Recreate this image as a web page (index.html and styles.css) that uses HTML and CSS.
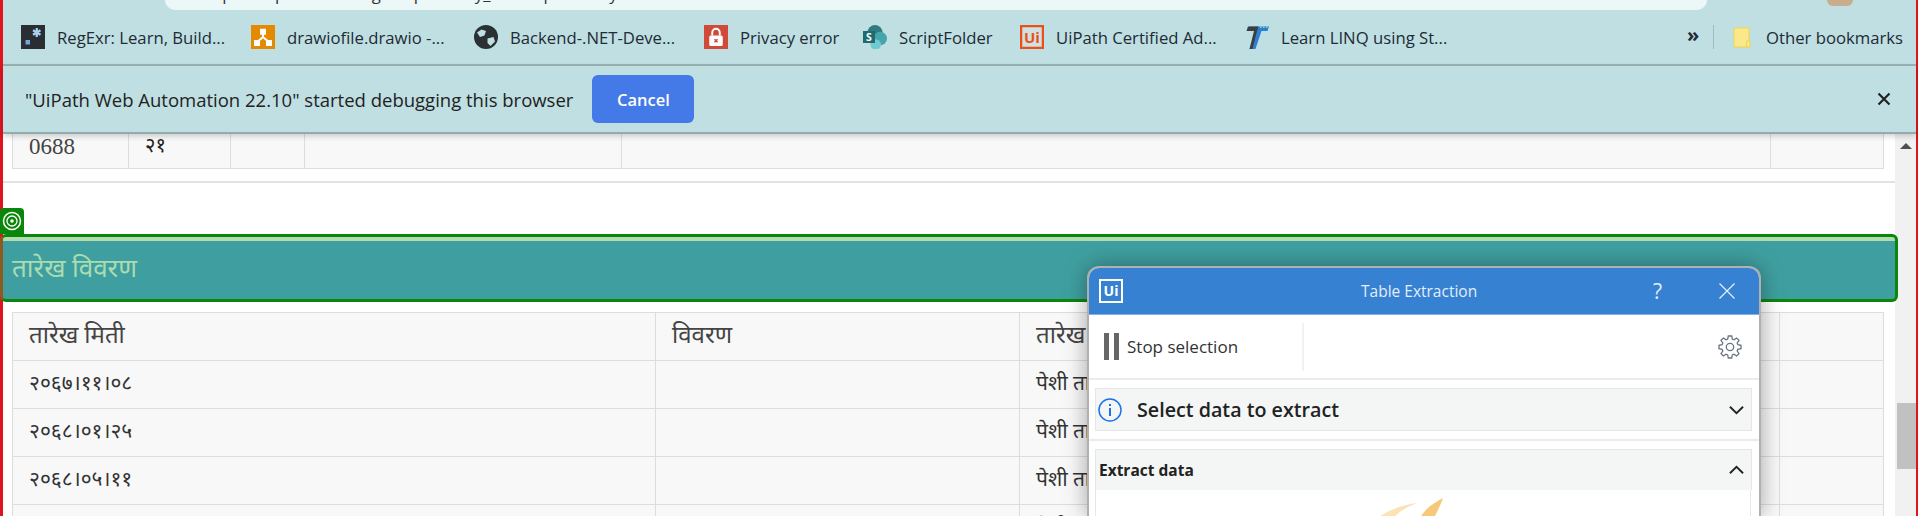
FILE: index.html
```html
<html>
<head>
    <meta charset="utf-8">
    <link rel="stylesheet" href="styles.css">
</head>
<body>
<div class="frame">
    <div class="omnibar">
        <div class="omnibox"><span class="omni-text">https://supremecourt.gov.np/weekly_dainik/pesi/daily/80</span></div>
        <div class="avatar"></div>
    </div>

    <div class="bookmarks">
        <div class="bm bm-1">
            <svg class="fav" viewBox="0 0 16 16"><rect width="16" height="16" fill="#2a2e33"/><rect x="3" y="10" width="3" height="3" fill="#6ea8dc"/><path d="M10.5 2v6M8 3.500l5 3M13 3.500l-5 3" stroke="#a8d0f0" stroke-width="1.500"/></svg>
            <span>RegExr: Learn, Build...</span>
        </div>
        <div class="bm bm-2">
            <svg class="fav" viewBox="0 0 16 16"><rect width="16" height="16" fill="#e38a00"/><path d="M8 6v3M8 8L4.500 11M8 8l3.500 3" stroke="#fff" stroke-width="1.300" fill="none"/><rect x="6" y="2.500" width="4" height="4" fill="#fff"/><rect x="2" y="10" width="4" height="4" fill="#fff"/><rect x="10" y="10" width="4" height="4" fill="#fff"/></svg>
            <span>drawiofile.drawio -...</span>
        </div>
        <div class="bm bm-3">
            <svg class="fav" viewBox="0 0 16 16"><circle cx="8" cy="8" r="8" fill="#2b3033"/><path d="M2 5l3-2 3 1-1 3-3 1zM9 9l4-1 1 3-3 3-2-2z" fill="#bfdfe3"/></svg>
            <span>Backend-.NET-Deve...</span>
        </div>
        <div class="bm bm-4">
            <svg class="fav" viewBox="0 0 16 16"><rect width="16" height="16" fill="#d04a3a"/><rect x="3.500" y="7" width="9" height="7" rx="1" fill="#fff"/><path d="M5.500 7V5a2.500 2.500 0 0 1 5 0v2" stroke="#fff" stroke-width="1.300" fill="none"/><path d="M7 9.500l2 2M9 9.500l-2 2" stroke="#d04a3a"/></svg>
            <span>Privacy error</span>
        </div>
        <div class="bm bm-5">
            <svg class="fav" viewBox="0 0 16 16"><circle cx="8" cy="5" r="5" fill="#2f7b80"/><circle cx="11.500" cy="9" r="4.500" fill="#45a5a8"/><circle cx="8.500" cy="13" r="3.500" fill="#6fcbd0"/><rect y="4" width="8" height="8" fill="#1f6c70"/><text x="4" y="10.500" class="sp-s">S</text></svg>
            <span>ScriptFolder</span>
        </div>
        <div class="bm bm-6">
            <svg class="fav" viewBox="0 0 16 16"><rect x="0.750" y="0.750" width="14.500" height="14.500" fill="#fbe9de" fill-opacity="0.300" stroke="#e8521a" stroke-width="1.500"/><text x="8" y="11.800" class="ui-s">Ui</text></svg>
            <span>UiPath Certified Ad...</span>
        </div>
        <div class="bm bm-7">
            <svg class="fav" viewBox="0 0 16 16"><path d="M3 1h13l-1 3h-4L7 16H3l4-12H2z" fill="#2f7fd0"/><path d="M2 1h7L8 4H1z" fill="#3a3f44"/><path d="M6 4L3 16h2L8 4z" fill="#3a3f44"/><path d="M10 1.500h5" stroke="#6fe0c0" stroke-dasharray="1 1"/></svg>
            <span>Learn LINQ using St...</span>
        </div>
        <div class="bm-more">»</div>
        <div class="bm-sep"></div>
        <div class="bm bm-other">
            <svg class="fav" viewBox="0 0 18 21"><path d="M1 1h15v15l-3 4H1z" fill="#fbe88a" stroke="#f0d54a"/><path d="M14 14h3v6h-4z" fill="#fbe88a" stroke="#f0d54a"/></svg>
            <span>Other bookmarks</span>
        </div>
    </div>

    <div class="infobar">
        <span class="info-msg">"UiPath Web Automation 22.10" started debugging this browser</span>
        <button class="cancel">Cancel</button>
        <svg class="info-close" viewBox="0 0 14 14"><path d="M1.500 1.500l11 11M12.500 1.500l-11 11" stroke="#222" stroke-width="2.200"/></svg>
    </div>

    <div class="page">
        <div class="content">
            <table class="grid grid-top">
                <tr><td class="c1">0688</td><td class="c2">२१</td><td class="c3"></td><td class="c4"></td><td class="c5"></td><td class="c6"></td></tr>
            </table>
            <div class="rule"></div>
            <div class="target-tab">
                <svg viewBox="0 0 20 20"><circle cx="10" cy="10" r="8.500" fill="none" stroke="#fff" stroke-width="1.500"/><circle cx="10" cy="10" r="5" fill="none" stroke="#fff" stroke-width="1.300"/><circle cx="10" cy="10" r="1.800" fill="#fff"/></svg>
            </div>
            <div class="section-head">तारेख विवरण</div>
            <div class="dates-wrap">
                <table class="grid grid-dates">
                    <tr class="row-head"><td class="d1">तारेख मिती</td><td class="d2">विवरण</td><td class="d3">तारेख</td><td class="d4"></td></tr>
                    <tr><td>२०६७।११।०८</td><td></td><td>पेशी तारेख</td><td></td></tr>
                    <tr><td>२०६८।०१।२५</td><td></td><td>पेशी तारेख</td><td></td></tr>
                    <tr><td>२०६८।०५।११</td><td></td><td>पेशी तारेख</td><td></td></tr>
                    <tr><td></td><td></td><td>पेशी तारेख</td><td></td></tr>
                </table>
            </div>
        </div>
        <div class="scrollbar">
            <div class="sb-up"></div>
            <div class="sb-thumb"></div>
        </div>

        <div class="dialog">
            <div class="dlg-head">
                <div class="dlg-logo">Ui</div>
                <div class="dlg-title">Table Extraction</div>
                <div class="dlg-help">?</div>
                <svg class="dlg-x" viewBox="0 0 16 16"><path d="M0.500 0.500l15 15M15.500 0.500l-15 15" stroke="#e8f1fb" stroke-width="1.200"/></svg>
            </div>
            <div class="dlg-tools">
                <div class="stop-btn">
                    <div class="pause"><i></i><i></i></div>
                    <span>Stop selection</span>
                </div>
                <svg class="gear" viewBox="0 0 24 24" fill="none" stroke="#68747f" stroke-width="1.300"><circle cx="12" cy="12" r="3.700"/><path d="M10.300 1h3.400l.6 3.100 1.700.7 2.600-1.800 2.400 2.400-1.800 2.600.7 1.700 3.100.6v3.400l-3.100.6-.7 1.700 1.800 2.600-2.400 2.400-2.600-1.800-1.700.7-.6 3.100h-3.400l-.6-3.100-1.700-.7-2.600 1.800-2.400-2.400 1.800-2.600-.7-1.700-3.100-.6v-3.400l3.100-.6.7-1.700-1.800-2.600 2.400-2.400 2.600 1.800 1.700-.7z"/></svg>
            </div>
            <div class="dlg-section">
                <div class="panel-head panel-select">
                    <svg class="info-i" viewBox="0 0 24 24"><circle cx="12" cy="12" r="11" fill="none" stroke="#1a73e8" stroke-width="1.500"/><rect x="11" y="10" width="2" height="8" fill="#1a73e8"/><rect x="11" y="6" width="2" height="2" fill="#1a73e8"/></svg>
                    <span>Select data to extract</span>
                    <svg class="chev" viewBox="0 0 16 10"><path d="M1 1.500l7 7 7-7" fill="none" stroke="#222" stroke-width="2"/></svg>
                </div>
            </div>
            <div class="dlg-section dlg-last">
                <div class="panel-head panel-extract">
                    <span>Extract data</span>
                    <svg class="chev" viewBox="0 0 16 10"><path d="M1 8.500l7-7 7 7" fill="none" stroke="#222" stroke-width="2"/></svg>
                </div>
                <div class="panel-body">
                    <svg class="wing" viewBox="0 0 66 20"><path d="M0 20C10 12 24 7 39 5C30 9 22 12 16 20z" fill="#fbe3b6"/><path d="M65 0C58 4 48 9 42 20L56 20C60 12 63 6 65 0z" fill="#f6c877"/></svg>
                </div>
            </div>
        </div>
    </div>
</div>
</body>
</html>
```

FILE: styles.css
```css
html, body {
    margin: 0;
    padding: 0;
    height: 516px;
    overflow: hidden;
}
.frame {
    box-sizing: border-box;
    width: 1918px;
    height: 516px;
    border-left: 3px solid #e0141f;
    border-right: 2px solid #e0141f;
    display: flex;
    flex-direction: column;
    font-family: "Open Sans", "Noto Sans", sans-serif;
    background: #fff;
}

/* top strip of the browser */
.omnibar {
    height: 10px;
    background: #bfdfe3;
    padding-left: 162px;
    flex: none;
    display: flex;
}
.omnibox {
    width: 1542px;
    height: 10px;
    flex: none;
    background: #ecf7f8;
    border-radius: 0 0 20px 20px;
    overflow: hidden;
}
.omni-text {
    display: block;
    margin: -16px 0 0 35px;
    font-size: 16.700px;
    line-height: 20px;
    color: #333;
    white-space: nowrap;
}
.avatar {
    width: 26px;
    height: 6px;
    flex: none;
    margin-left: 120px;
    background: #c9ad8c;
    border-radius: 0 0 13px 13px;
}

.bookmarks {
    height: 56px;
    flex: none;
    box-sizing: border-box;
    background: #bfdfe3;
    border-bottom: 2px solid #9db5b5;
    display: flex;
    align-items: center;
    color: #222b33;
    font-size: 16.700px;
}
.bm {
    display: flex;
    align-items: center;
    white-space: nowrap;
    flex: none;
}
.fav {
    width: 24px;
    height: 24px;
    flex: none;
    margin-right: 12px;
}
.bm-1 { margin-left: 18px; width: 230px; }
.bm-2 { width: 223px; }
.bm-3 { width: 230px; }
.bm-4 { width: 159px; }
.bm-5 { width: 157px; }
.bm-6 { width: 225px; }
.bm-7 { width: 442px; }
.sp-s { font-size: 7px; font-weight: 700; fill: #fff; text-anchor: middle; }
.ui-s { font-size: 10px; font-weight: 700; fill: #e8521a; text-anchor: middle; }
.bm-more {
    font-size: 20px;
    font-weight: 700;
    line-height: 20px;
    margin-top: -4px;
    width: 26px;
}
.bm-sep {
    width: 1px;
    height: 24px;
    background: #9fbabd;
    margin-right: 19px;
}
.bm-other .fav {
    width: 18px;
    height: 21px;
    margin-right: 15px;
}

.infobar {
    height: 68px;
    flex: none;
    box-sizing: border-box;
    background: #bfdfe3;
    border-bottom: 2px solid #93abad;
    box-shadow: 0 2px 6px rgba(0, 0, 0, 0.2);
    display: flex;
    align-items: center;
    padding: 0 25px 0 22px;
    position: relative;
    z-index: 3;
}
.info-msg {
    font-size: 18.500px;
    color: #222;
    white-space: nowrap;
}
.cancel {
    margin-left: 19px;
    width: 102px;
    height: 48px;
    border: 0;
    border-radius: 6px;
    background: #4479e8;
    color: #fff;
    font-family: inherit;
    font-size: 16.500px;
    font-weight: 600;
}
.info-close {
    margin-left: auto;
    width: 14px;
    height: 14px;
}

/* the web page under the bars */
.page {
    flex: 1;
    display: flex;
    min-height: 0;
    position: relative;
}
.content {
    flex: 1;
    min-width: 0;
}
.scrollbar {
    width: 21px;
    flex: none;
    background: #f1f1f1;
    display: flex;
    flex-direction: column;
    align-items: center;
}
.sb-up {
    margin-top: 9px;
    width: 0;
    height: 0;
    border-left: 6px solid transparent;
    border-right: 6px solid transparent;
    border-bottom: 6px solid #505050;
}
.sb-thumb {
    margin: 254px 0 0 2px;
    width: 19px;
    height: 66px;
    background: #c1c1c1;
}

.grid {
    border-collapse: collapse;
    table-layout: fixed;
    background: #f8f8f8;
    margin-left: 9px;
    width: 1871px;
    font-family: "Liberation Serif", "Noto Sans Devanagari", serif;
    color: #333;
}
.grid td {
    box-sizing: border-box;
    border: 1px solid #ddd;
    padding: 0 16px;
    font-size: 21px;
    white-space: nowrap;
    overflow: hidden;
}
.grid-top {
    margin-top: -10px;
}
.grid-top td {
    height: 44px;
}
.grid-top .c1 { width: 116px; font-size: 23px; color: #444; }
.grid-top .c2 { width: 102px; font-size: 20px; color: #222; }
.c3 { width: 74px; }
.c4 { width: 317px; }
.c5 { width: 1149px; }
.c6 { width: 113px; }
.rule {
    height: 2px;
    background: #e2e2e2;
    margin-top: 12px;
}
.target-tab {
    width: 24px;
    height: 26px;
    margin: 25px 0 0 -3px;
    background: #0a870a;
    border-radius: 4px 4px 0 0;
    display: flex;
    align-items: center;
    justify-content: center;
}
.target-tab svg {
    width: 20px;
    height: 20px;
}
.section-head {
    box-sizing: border-box;
    height: 68px;
    width: 1898px;
    margin-left: -3px;
    background: linear-gradient(#b3dcae 0, #b3dcae 4px, #3f9fa0 4px);
    border: 3px solid #0a870a;
    border-left-color: #8a5a1e;
    border-radius: 6px;
    padding: 5px 9px 0;
    display: flex;
    align-items: center;
    color: #a9dcb0;
    font-family: "Liberation Serif", "Noto Sans Devanagari", serif;
    font-size: 26px;
    position: relative;
    z-index: 1;
}
.dates-wrap {
    height: 205px;
    margin-top: 10px;
    overflow: hidden;
}
.grid-dates td {
    height: 48px;
    color: #333;
}
.grid-dates .row-head td {
    font-size: 24px;
    color: #444;
}
.d1 { width: 643px; }
.d2 { width: 364px; }
.d3 { width: 760px; }
.d4 { width: 104px; }

/* floating extraction window */
.dialog {
    position: absolute;
    left: 1084px;
    top: 132px;
    width: 674px;
    height: 250px;
    box-sizing: border-box;
    border: 2px solid #b0b0b0;
    border-bottom: 0;
    border-radius: 12px 12px 0 0;
    background: #fff;
    box-shadow: 0 0 22px rgba(0, 0, 0, 0.35);
    overflow: hidden;
    display: flex;
    flex-direction: column;
    z-index: 2;
}
.dlg-head {
    height: 46px;
    flex: none;
    background: #3681d2;
    border-bottom: 1px solid #7fb2e8;
    display: flex;
    align-items: center;
    color: #e3eefa;
}
.dlg-logo {
    box-sizing: border-box;
    width: 24px;
    height: 24px;
    margin-left: 10px;
    border: 2px solid #fff;
    color: #fff;
    font-size: 14px;
    font-weight: 700;
    line-height: 20px;
    text-align: center;
}
.dlg-title {
    margin-left: 238px;
    font-size: 15.500px;
    width: 292px;
}
.dlg-help {
    font-size: 21px;
    width: 66px;
}
.dlg-x {
    width: 16px;
    height: 16px;
}
.dlg-tools {
    height: 63px;
    flex: none;
    border-bottom: 2px solid #ececec;
    display: flex;
    align-items: center;
    padding: 0 17px 0 15px;
    justify-content: space-between;
}
.stop-btn {
    height: 48px;
    width: 198px;
    border-right: 2px solid #f2f2f2;
    display: flex;
    align-items: center;
    font-size: 17px;
    color: #333;
}
.pause {
    display: flex;
    gap: 5px;
    margin-right: 8px;
}
.pause i {
    display: block;
    width: 5px;
    height: 27px;
    background: #666;
}
.gear {
    width: 24px;
    height: 24px;
}
.dlg-section {
    padding: 8px 7px 8px 6px;
    flex: none;
    border-bottom: 2px solid #ececec;
}
.dlg-last {
    border-bottom: 0;
    flex: 1;
    display: flex;
    flex-direction: column;
}
.panel-head {
    box-sizing: border-box;
    background: #f4f6f6;
    border: 1px solid #e6e6e6;
    display: flex;
    align-items: center;
    color: #222;
    font-weight: 600;
}
.panel-select {
    height: 43px;
    padding: 0 7px 0 2px;
    font-size: 19.700px;
}
.info-i {
    width: 24px;
    height: 24px;
    margin-right: 15px;
}
.panel-extract {
    height: 41px;
    padding: 0 7px 0 3px;
    font-size: 15.500px;
    font-weight: 700;
    border-bottom: 0;
}
.chev {
    margin-left: auto;
    width: 15px;
    height: 10px;
}
.panel-body {
    flex: 1;
    border: 1px solid #e6e6e6;
    border-top: 0;
    margin-right: 1px;
    padding: 8px 0 0 282px;
}
.wing {
    width: 66px;
    height: 20px;
    display: block;
}
```
